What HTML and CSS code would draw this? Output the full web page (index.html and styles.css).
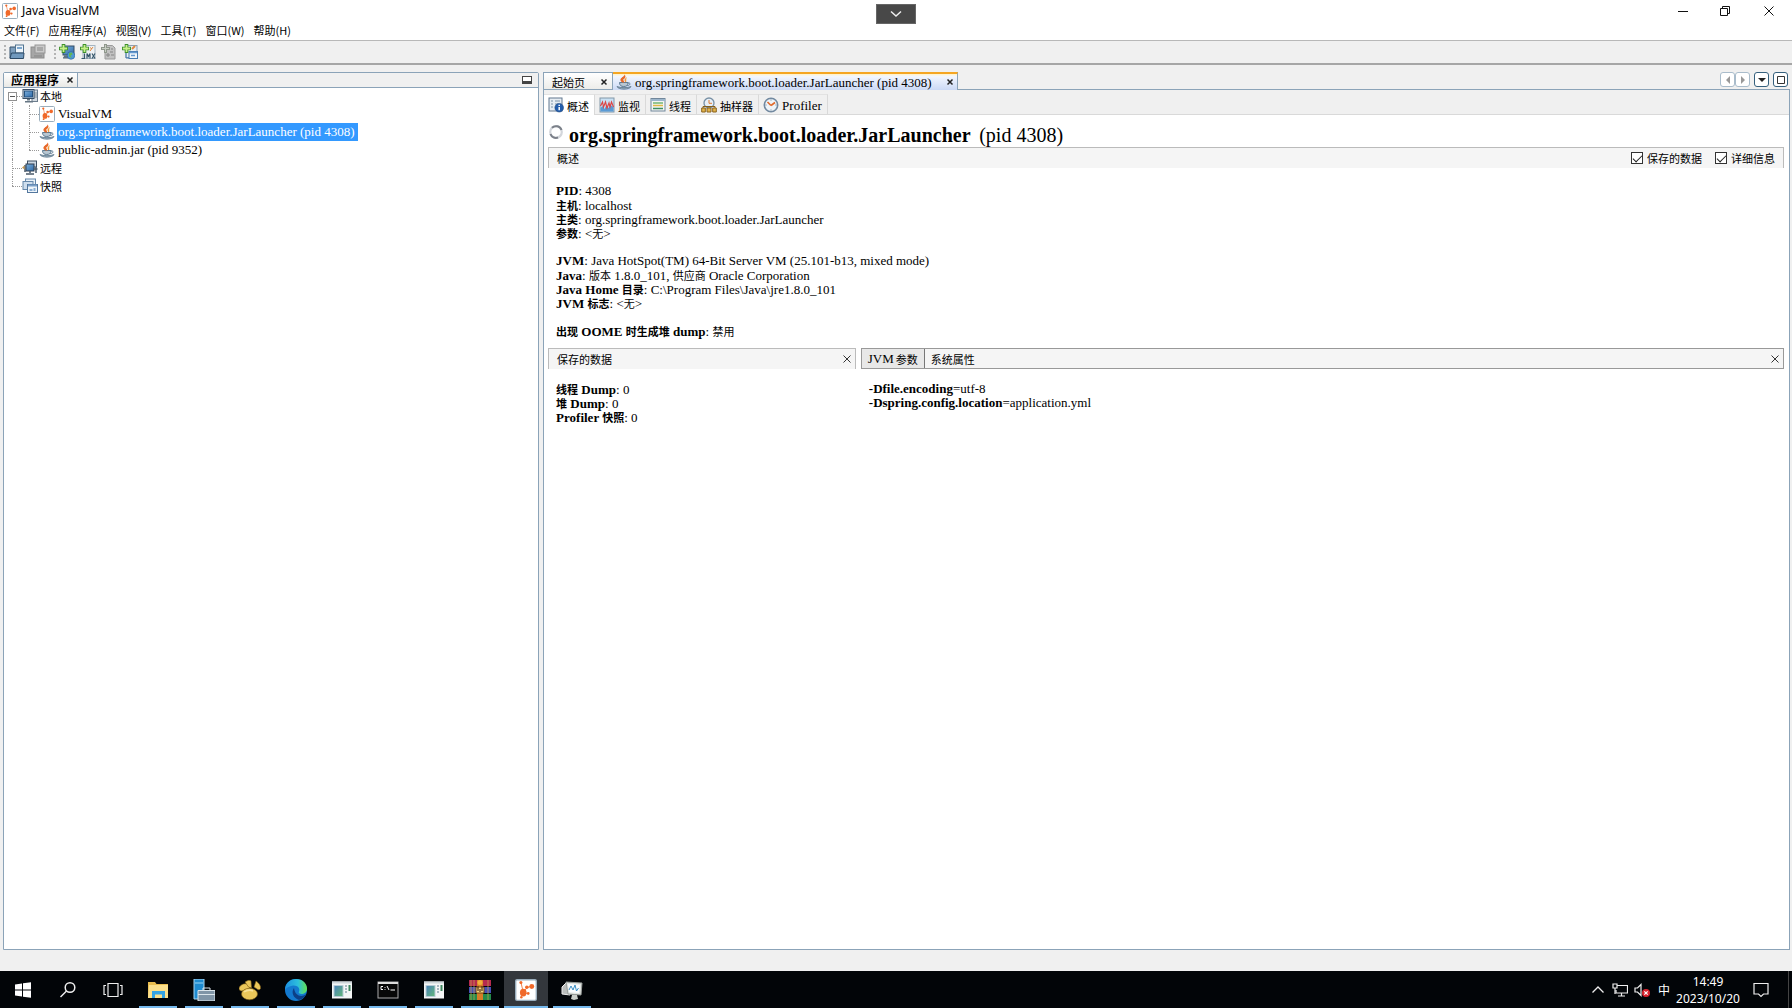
FILE: index.html
```html
<!DOCTYPE html>
<html lang="zh-CN">
<head>
<meta charset="utf-8">
<title>Java VisualVM</title>
<link rel="stylesheet" href="styles.css">
</head>
<body>
<svg class="defs" aria-hidden="true">
  <defs>
    <linearGradient id="blueScreen" x1="0" y1="0" x2="1" y2="1"><stop offset="0" stop-color="#7db0dd"/><stop offset="1" stop-color="#2b67a5"/></linearGradient>
    <linearGradient id="edgeA" x1="0" y1="0" x2="1" y2="0"><stop offset="0" stop-color="#1c8fe0"/><stop offset=".6" stop-color="#2cc0dc"/><stop offset="1" stop-color="#63e34f"/></linearGradient>
    <linearGradient id="app" x1="0" y1="0" x2="1" y2="1"><stop offset="0" stop-color="#4a83b8"/><stop offset="1" stop-color="#62b57a"/></linearGradient>
    <symbol id="vvm" viewBox="0 0 16 16"><rect x=".5" y=".5" width="15" height="15" rx="1" fill="#fff" stroke="#9aaebd"/><path d="M6 9.500 4.300 2.500M7 8.500l2-2.500M7 10l3 1M9 6l3.400-.6" fill="none" stroke="#f0692a" stroke-width=".6"/><g fill="#f0692a"><ellipse cx="6" cy="9.900" rx="2.400" ry="2.900"/><circle cx="4.300" cy="2.600" r="1.100"/><circle cx="8.600" cy="6" r="1.300"/><circle cx="12.200" cy="5.400" r="1.800"/><circle cx="9.600" cy="10.500" r="1"/><circle cx="4.600" cy="13.200" r=".9"/></g></symbol>
    <symbol id="java" viewBox="0 0 16 16"><path d="M8.500 0C10 3-1 5 8 9 6 6 7 5.500 8.500 4.500 10 3.500 9.500 2 8.500 0z" fill="#e8692a"/><path d="M11 3C8.500 4.500 8 6 9 7.500 9.500 9 8.500 9.500 8.500 9.500 12 8 9 6.500 11 3z" fill="#f09a3a"/><path d="M3.500 8.500h8.500c0 3-1.500 4-4.200 4s-4.200-1-4.300-4z" fill="#b8c7d2" stroke="#5f7c92"/><path d="M6.500 8.500C4 6 5 4 7.500 3 7 5 7 6 8.500 8.500z" fill="#e8692a"/><path d="M12 9c3-.7 2.600 2.600-.8 2.600" fill="none" stroke="#5f7c92"/><path d="M1 12.500c1 3.500 13 3.500 14 0-3 1.500-11 1.500-14 0z" fill="#9fb2c0" stroke="#587489" stroke-width=".8"/></symbol>
    <symbol id="host" viewBox="0 0 16 16"><rect x="10" y="2" width="5.500" height="11.500" fill="#d4dbe1" stroke="#6c7d8d"/><path d="M11 5h4M11 7h4M11 9h4" stroke="#7d8c99"/><rect x="1" y="1.500" width="11" height="9" fill="#dce5ec" stroke="#394f66"/><rect x="2.500" y="3" width="8" height="6" fill="url(#blueScreen)" stroke="#24517e"/><path d="M5 11h3v1.500H5zM3 13h8v1.500H3z" fill="#667684"/></symbol>
    <symbol id="remote" viewBox="0 0 16 16"><rect x="5.500" y="1" width="9" height="6" fill="#cad7e4" stroke="#3d4f63"/><rect x="4" y="4" width="8" height="7" fill="url(#blueScreen)" stroke="#303f50"/><path d="M8 11v2M4 14h8M14 7v6M3 5v7M12 9h3.500" fill="none" stroke="#4a5a6a" stroke-width="1.500"/><path d="M0 7.500l2.500-2v4z" fill="#c7964b"/></symbol>
    <symbol id="snap" viewBox="0 0 16 16"><rect x="3.500" y="1" width="10" height="8" fill="#e9f1f8" stroke="#6688aa"/><rect x="1" y="3.500" width="10" height="8" fill="#cfdeed" stroke="#6688aa"/><rect x="5.500" y="6.500" width="10" height="8" fill="#eff5fa" stroke="#53779e"/><path d="M6 7.500h9" stroke="#7ba0c8" stroke-width="2"/><path d="M7.500 11h3v2h-3zM11.500 10h2v3h-2z" fill="#8aaed3"/></symbol>
    <symbol id="open" viewBox="0 0 16 16"><path d="M1 3h5l1-1v12H1z" fill="#7f9fbd" stroke="#34536f"/><rect x="6.500" y="1" width="8" height="8" fill="#edf4fa" stroke="#53748f"/><path d="M8 3h5v2H8z" fill="#7ba6cd"/><path d="M1 14.500 2.500 9H15l-.5 5.500z" fill="#7199bd" stroke="#2d4a66"/></symbol>
    <symbol id="save" viewBox="0 0 16 16"><rect x="1" y="3" width="13" height="11" fill="#a6a6a6" stroke="#8b8b8b"/><rect x="5" y="1" width="10" height="8" fill="#c9c9c9" stroke="#959595"/><path d="M7 4h6M7 6h6M4 12h8" stroke="#858585"/></symbol>
    <symbol id="plus" viewBox="0 0 10 10"><path d="M3 0h4v3h3v4H7v3H3V7H0V3h3z" fill="#3c8f2c"/><path d="M4 1h2v3h3v2H6v3H4V6H1V4h3z" fill="#c8f08a"/></symbol>
    <symbol id="addhost" viewBox="0 0 16 16"><rect x="4" y="2" width="11" height="9" fill="url(#blueScreen)" stroke="#344d65"/><path d="M5 12h4v2H4" fill="#718294" stroke="#4f6071"/><circle cx="12" cy="11.500" r="3.800" fill="#4e98d6" stroke="#2a6196" stroke-width=".6"/><path d="M10 9l3-.5.5 2-2 1 1.500 2.500-3-1.500z" fill="#61b652"/><use href="#plus" width="9" height="9"/></symbol>
    <symbol id="addjmx" viewBox="0 0 16 16"><rect x="3" y="1.500" width="12" height="13" fill="#eef1f4" stroke="#a5b4c0"/><path d="M10 3.500l2 1.500M13 3l-3 4" stroke="#e0893f"/><path d="M4.500 9.500v5h-3M7 14.500v-5l1.500 3 1.500-3v5M12 9.500l3 5M15 9.500l-3 5" fill="none" stroke="#37576b" stroke-width="1.200"/><use href="#plus" width="9" height="9"/></symbol>
    <symbol id="adddump" viewBox="0 0 16 16"><path d="M4 1.500h7.500L14 4v11H4z" fill="#c2c2c2" stroke="#9b9b9b"/><path d="M6 10h2v2H6zM9 8h3M10 11h3M10 5h2" stroke="#858585" fill="none"/><path d="M3 0h3v3h3v3H6v3H3V6H0V3h3z" fill="#8f978c"/><path d="M4 1h1v3h3v1H5v3H4V5H1V4h3z" fill="#c7cdc3"/></symbol>
    <symbol id="addsnap" viewBox="0 0 16 16"><rect x="4" y="1.500" width="11" height="12" fill="#e8eef4" stroke="#8ba1b5"/><path d="M10 5l3-3" stroke="#e0893f" stroke-width="2"/><rect x="7" y="7.500" width="8.500" height="7" fill="#eff5fa" stroke="#477ab0"/><path d="M7 8.500h8M9 11.500h4" stroke="#6499cf" stroke-width="1.500"/><path d="M4 9v5h3" fill="none" stroke="#477ab0"/><use href="#plus" width="9" height="9"/></symbol>
    <symbol id="overview" viewBox="0 0 16 16"><rect x="1" y="1" width="13" height="13" fill="#e7edf3" stroke="#63798f"/><path d="M3 4h2M7 4h5M3 7h2M7 7h3M3 10h2" stroke="#7f94a8"/><circle cx="11.200" cy="10.700" r="4.300" fill="#235dac" stroke="#194480" stroke-width=".6"/><path d="M11.200 10v3.200M11.200 7.700v1.300" stroke="#fff" stroke-width="1.500"/></symbol>
    <symbol id="monitor" viewBox="0 0 16 16"><rect x="1" y="1" width="14" height="14" fill="#c9e1f4" stroke="#8297a8"/><path d="M1.500 14.500V11l2-2 2 3 2-4 2 3 2-3 3 2v4.500z" fill="#5b9bd5"/><path d="M1.500 9l2-4 1 5 2-5 1.500 6 2-5 1 4 1.500-5 2 5" fill="none" stroke="#dc4646" stroke-width="1.200"/></symbol>
    <symbol id="threads" viewBox="0 0 16 16"><rect x="1" y="1.500" width="14" height="12.500" fill="#f4f5f3" stroke="#71879b"/><path d="M1 3h14" stroke="#9bb5cc" stroke-width="2"/><path d="M3 6h10" stroke="#52a652" stroke-width="1.200"/><path d="M3 8.500h10" stroke="#dfb945" stroke-width="1.500"/><path d="M3 11.500h10" stroke="#3d8d62" stroke-width="1.500"/></symbol>
    <symbol id="sampler" viewBox="0 0 16 16"><circle cx="8" cy="6" r="5" fill="#e8eff6" stroke="#7890a5" stroke-width="1.300"/><path d="M8 3v3.300h3" stroke="#de7c34" fill="none"/><path d="M2 11v-1.500h12V11" fill="none" stroke="#84601e"/><path d="M.7 11h3.600v4H.7zM6 11h4v4H6zM11.700 11h3.600v4h-3.600z" fill="#e3b54a" stroke="#8a631e"/></symbol>
    <symbol id="clock" viewBox="0 0 16 16"><circle cx="8" cy="8" r="6.700" fill="#eef4f9" stroke="#7289a0" stroke-width="1.600"/><path d="M8 8.500 4.500 5M8 8.500l4-3" stroke="#e06a2c" stroke-width="1.600"/><path d="M8 2.500v1M8 12.500v1M2.500 8h1M12.500 8h1" stroke="#6b8196"/></symbol>
    <symbol id="window" viewBox="0 0 22 20"><rect x="1" y="1.500" width="20" height="17" fill="#f4f6f6"/><path d="M1 2.500h20" stroke="#cfd6db" stroke-width="2"/><rect x="2.500" y="5" width="10" height="12" fill="#b7cbd6"/><rect x="3.500" y="6" width="8" height="10" fill="url(#app)"/><path d="M14 6h2M14 9h2M14 12h2" stroke="#a8b7c2" stroke-width="2"/><path d="M18.500 5v6" stroke="#3c875e" stroke-width="2"/></symbol>
  </defs>
</svg>

<div class="app">
  <header class="titlebar">
    <svg class="i16"><use href="#vvm"/></svg>
    <h1>Java VisualVM</h1>
    <button class="pull" aria-label="展开"><svg viewBox="0 0 12 8"><path d="M1 1.500l5 4.500 5-4.500" fill="none" stroke="#eee" stroke-width="1.500"/></svg></button>
    <div class="winbtns">
      <button aria-label="最小化"><svg viewBox="0 0 12 12"><path d="M1 6.500h10" stroke="#111"/></svg></button>
      <button aria-label="还原"><svg viewBox="0 0 12 12"><path d="M1.500 3.500h7v7h-7zM3.500 3V1.500h7v7H9" fill="none" stroke="#111"/></svg></button>
      <button aria-label="关闭"><svg viewBox="0 0 12 12"><path d="M1.500 1.500l9 9M10.500 1.500l-9 9" stroke="#111"/></svg></button>
    </div>
  </header>
  <nav class="menu">
    <button>文件(F)</button><button>应用程序(A)</button><button>视图(V)</button><button>工具(T)</button><button>窗口(W)</button><button>帮助(H)</button>
  </nav>
  <div class="toolbar">
    <span class="grip"></span>
    <button aria-label="打开"><svg class="i16"><use href="#open"/></svg></button>
    <button aria-label="保存" disabled><svg class="i16"><use href="#save"/></svg></button>
    <span class="grip"></span>
    <button aria-label="添加远程主机"><svg class="i16"><use href="#addhost"/></svg></button>
    <button aria-label="添加 JMX 连接"><svg class="i16"><use href="#addjmx"/></svg></button>
    <button aria-label="添加 Dump" disabled><svg class="i16"><use href="#adddump"/></svg></button>
    <button aria-label="添加快照"><svg class="i16"><use href="#addsnap"/></svg></button>
  </div>

  <main class="work">
    <aside class="panel left">
      <div class="strip">
        <div class="dock"><b>应用程序</b><button class="x" aria-label="关闭"><svg viewBox="0 0 8 8"><path d="M1.500 1.500l5 5M6.500 1.500l-5 5" stroke="#222" stroke-width="1.500"/></svg></button></div>
        <button class="mini" aria-label="最小化窗口"></button>
      </div>
      <ul class="tree">
        <li><div class="row"><button class="fold" aria-label="折叠"></button><svg class="i16"><use href="#host"/></svg><span>本地</span></div>
          <ul>
            <li><div class="row"><svg class="i16"><use href="#vvm"/></svg><span class="lat">VisualVM</span></div></li>
            <li><div class="row"><svg class="i16"><use href="#java"/></svg><span class="lat sel">org.springframework.boot.loader.JarLauncher (pid 4308)</span></div></li>
            <li><div class="row"><svg class="i16"><use href="#java"/></svg><span class="lat">public-admin.jar (pid 9352)</span></div></li>
          </ul>
        </li>
        <li><div class="row"><svg class="i16"><use href="#remote"/></svg><span>远程</span></div></li>
        <li><div class="row"><svg class="i16"><use href="#snap"/></svg><span>快照</span></div></li>
      </ul>
    </aside>

    <section class="editor">
      <div class="tabs">
        <div class="tab"><span>起始页</span><button class="x" aria-label="关闭"><svg viewBox="0 0 8 8"><path d="M1.500 1.500l5 5M6.500 1.500l-5 5" stroke="#222" stroke-width="1.500"/></svg></button></div>
        <div class="tab on"><svg class="i16"><use href="#java"/></svg><span class="lat">org.springframework.boot.loader.JarLauncher (pid 4308)</span><button class="x" aria-label="关闭"><svg viewBox="0 0 8 8"><path d="M1.500 1.500l5 5M6.500 1.500l-5 5" stroke="#222" stroke-width="1.500"/></svg></button></div>
        <div class="tabctl">
          <button class="dim" aria-label="向左" disabled><svg viewBox="0 0 8 8"><path d="M6 0v8L2 4z" fill="#999"/></svg></button><button class="dim r" aria-label="向右" disabled><svg viewBox="0 0 8 8"><path d="M2 0v8l4-4z" fill="#999"/></svg></button>
          <button aria-label="列表"><svg viewBox="0 0 8 8"><path d="M0 2h8L4 6z" fill="#222"/></svg></button>
          <button aria-label="最大化"><svg viewBox="0 0 8 8"><path d="M.5 .5h7v7h-7z" fill="none" stroke="#333"/></svg></button>
        </div>
      </div>
      <div class="body">
        <div class="views">
          <button class="on"><svg class="i16"><use href="#overview"/></svg><span>概述</span></button>
          <button><svg class="i16"><use href="#monitor"/></svg><span>监视</span></button>
          <button><svg class="i16"><use href="#threads"/></svg><span>线程</span></button>
          <button><svg class="i16"><use href="#sampler"/></svg><span>抽样器</span></button>
          <button><svg class="i16"><use href="#clock"/></svg><span class="lat">Profiler</span></button>
        </div>
        <div class="content">
          <div class="heading"><svg class="i16" viewBox="0 0 16 16"><circle cx="8" cy="8" r="5.800" fill="none" stroke="#d3d6db" stroke-width="2.200"/><path d="M4 3.800A5.800 5.800 0 0 1 13.500 6M2.500 10A5.800 5.800 0 0 0 10 13.500" fill="none" stroke="#7b8089" stroke-width="2"/></svg><h2>org.springframework.boot.loader.JarLauncher <span>(pid 4308)</span></h2></div>
          <div class="bar"><span>概述</span>
            <div class="checks"><label><input type="checkbox" checked>保存的数据</label><label><input type="checkbox" checked>详细信息</label></div>
          </div>
          <div class="info">
            <p><b>PID</b>: 4308</p>
            <p><b><i>主机</i></b>: localhost</p>
            <p><b><i>主类</i></b>: org.springframework.boot.loader.JarLauncher</p>
            <p><b><i>参数</i></b>: &lt;<i>无</i>&gt;</p>
            <p class="gap"><b>JVM</b>: Java HotSpot(TM) 64-Bit Server VM (25.101-b13, mixed mode)</p>
            <p><b>Java</b>: <i>版本</i> 1.8.0_101, <i>供应商</i> Oracle Corporation</p>
            <p><b>Java Home <i>目录</i></b>: C:\Program Files\Java\jre1.8.0_101</p>
            <p><b>JVM <i>标志</i></b>: &lt;<i>无</i>&gt;</p>
            <p class="gap"><b><i>出现</i> OOME <i>时生成堆</i> dump</b>: <i>禁用</i></p>
          </div>
          <div class="cols">
            <section>
              <div class="bar"><span>保存的数据</span><button class="close" aria-label="关闭"><svg viewBox="0 0 8 8"><path d="M.5 .5l7 7M7.500.5l-7 7" stroke="#333"/></svg></button></div>
              <div class="info">
                <p><b><i>线程</i> Dump</b>: 0</p>
                <p><b><i>堆</i> Dump</b>: 0</p>
                <p><b>Profiler <i>快照</i></b>: 0</p>
              </div>
            </section>
            <section>
              <div class="bar sub"><button class="on"><span class="lat">JVM</span> 参数</button><button>系统属性</button><button class="close" aria-label="关闭"><svg viewBox="0 0 8 8"><path d="M.5 .5l7 7M7.500.5l-7 7" stroke="#333"/></svg></button></div>
              <div class="info">
                <p><b>-Dfile.encoding</b>=utf-8</p>
                <p><b>-Dspring.config.location</b>=application.yml</p>
              </div>
            </section>
          </div>
        </div>
      </div>
    </section>
  </main>

  <footer class="taskbar">
    <button class="sys" aria-label="开始"><svg viewBox="0 0 20 20"><path d="M2 4.500l7-1V9.500H2zM10 3.300l8-1.100v7.300h-8zM2 10.500h7v6l-7-1zM10 10.500h8v7.300l-8-1.100z" fill="#fff"/></svg></button>
    <button class="sys" aria-label="搜索"><svg viewBox="0 0 20 20"><circle cx="12" cy="7.500" r="4.800" fill="none" stroke="#eee" stroke-width="1.500"/><path d="M8.500 11 2.500 17" stroke="#eee" stroke-width="1.500"/></svg></button>
    <button class="sys" aria-label="任务视图"><svg viewBox="0 0 20 20"><path d="M5 3.500h10v13H5zM3 5.500H1v9h2M17 5.500h2v9h-2" fill="none" stroke="#eee" stroke-width="1.200"/></svg></button>
    <button class="task" aria-label="文件资源管理器"><svg viewBox="0 0 22 22"><path d="M1 3h7l1.500 2H21v14H1z" fill="#e9bd4f"/><path d="M2 6h19v13H1z" fill="#fbe08c"/><path d="M5 19v-7h13v7h-3v-3.500H8V19z" fill="#35a4e4"/></svg></button>
    <button class="task" aria-label="服务器管理器"><svg viewBox="0 0 22 22"><path d="M1 0h10v20H1z" fill="#1e8bd0" stroke="#a9d8f2"/><path d="M2 4h8" stroke="#9cd7f5"/><path d="M5 11.500h17V22H5z" fill="#8095a7" stroke="#dce5eb"/><path d="M10 11V9h7v2M5 15.500h17" fill="none" stroke="#dce5eb"/></svg></button>
    <button class="task" aria-label="应用"><svg viewBox="0 0 22 22"><g fill="#ebc75a" stroke="#7d5c14" stroke-width=".6"><path d="M0 9C1 6 5 4 8 5l3 4-8 3C1 12 0 11 0 9z"/><path d="M6 3c3-2 5-2 6-1l.5 7-3-1z"/><path d="M17 2c3 2 5 5 4.500 7.500C21 11 19 11 18 10l-3-2z"/><ellipse cx="10.500" cy="15" rx="8" ry="5.800"/></g><path d="M5 13c3-2 7-2 9-1" fill="none" stroke="#f8e29a" stroke-width="1.500"/></svg></button>
    <button class="task" aria-label="Edge"><svg viewBox="0 0 22 22"><circle cx="11" cy="11" r="11" fill="#1379ce"/><path d="M0 11C0 4 5 0 11 0c7 0 11 5 11 9.500 0 4-3 5.500-5.500 5.500-2 0-3.500-1-2.500-2.500C15.500 9 12 6 8 6.500 4 7 1 9 0 11z" fill="url(#edgeA)"/><path d="M9 9c-3 4-1 10 5 12 3-.5 6-3 7-5.500-5 3-11 1.500-12-6.500z" fill="#0c3f86"/></svg></button>
    <button class="task" aria-label="窗口"><svg viewBox="0 0 22 20"><use href="#window"/></svg></button>
    <button class="task" aria-label="命令提示符"><svg viewBox="0 0 22 20"><rect x="1" y="2" width="20" height="16" fill="#080808" stroke="#aaa"/><path d="M1 3h20" stroke="#ddd" stroke-width="2"/><path d="M6 6.500H4v3h2M8 7v.8M8 9v.8M10 6l2 4M13.500 10H18" fill="none" stroke="#fff"/></svg></button>
    <button class="task" aria-label="窗口"><svg viewBox="0 0 22 20"><use href="#window"/></svg></button>
    <button class="task" aria-label="WinRAR"><svg viewBox="0 0 22 22"><path d="M0 1h22v6H0z" fill="#b52a4e"/><path d="M0 8h22v6H0z" fill="#4450b5"/><path d="M0 15h22v6H0z" fill="#24894a"/><path d="M2 1v20M5 1v20M19 1v20" stroke="#c8a64a" stroke-width=".7"/><path d="M8 1h6v20H8z" fill="#d77d27"/><path d="M7 8h8v6H7z" fill="#f2d37d" stroke="#734417"/><path d="M9 7v5M13 7v5M11 10v3" stroke="#553314" stroke-width="1.200"/><circle cx="11" cy="3.500" r="2.500" fill="#f2ae3d"/></svg></button>
    <button class="task on" aria-label="Java VisualVM"><svg viewBox="0 0 22 22"><use href="#vvm"/></svg></button>
    <button class="task" aria-label="性能监视器"><svg viewBox="0 0 22 22"><path d="M1 8l5-5 3 13-8-1z" fill="#babdbb" stroke="#eee"/><path d="M5 3l16 1-1 12-13-1z" fill="#e1e5e2" stroke="#969c99"/><path d="M7 5l12 .7-1 8.300-10-.8z" fill="#f8fcff"/><path d="M8 11l2-4 2 4 2-5 1.500 6 2-3" fill="none" stroke="#3b8fc3"/><path d="M11 16h5l1 4-4 1-3-1z" fill="#c9ceca"/></svg></button>
    <div class="tray">
      <button aria-label="显示隐藏的图标"><svg viewBox="0 0 16 16"><path d="M2.500 10.500 8 5l5.500 5.500" fill="none" stroke="#eee" stroke-width="1.300"/></svg></button>
      <button aria-label="网络"><svg viewBox="0 0 16 16"><path d="M5 3.500h10.500v7.500H4V8M9.500 11v3M6 14h7" fill="none" stroke="#eee" stroke-width="1.200"/><path d="M1 2h4v4H1zM3 6v6" fill="none" stroke="#eee" stroke-width="1.200"/></svg></button>
      <button aria-label="音量"><svg viewBox="0 0 16 16"><path d="M1 6h2.500L7 2.500v11L3.500 10H1z" fill="none" stroke="#eee" stroke-width="1.200"/><circle cx="12" cy="11" r="4" fill="#d9232e"/><path d="M10.300 9.300l3.400 3.400M13.700 9.300l-3.400 3.400" stroke="#fff" stroke-width="1.200"/></svg></button>
      <button class="ime">中</button>
      <div class="time"><span>14:49</span><span>2023/10/20</span></div>
      <button class="note" aria-label="通知"><svg viewBox="0 0 16 16"><path d="M1 1.500h14v10.500h-4.500L8 14.500 5.500 12H1z" fill="none" stroke="#eee" stroke-width="1.200"/></svg></button>
    </div>
  </footer>
</div>
</body>
</html>
```
FILE: styles.css
```css
* { box-sizing: border-box; }
body { margin: 0; font: 11px/14px "Noto Sans CJK SC", sans-serif; color: #000; background: #f0f0f0; }
button { font: inherit; color: inherit; border: 0; padding: 0; margin: 0; background: none; display: flex; align-items: center; justify-content: center; }
ul, p, h1, h2 { margin: 0; padding: 0; list-style: none; }
svg { display: block; flex: none; }
.defs { position: absolute; width: 0; height: 0; }
.i16 { width: 16px; height: 16px; }
.lat { font-family: "Liberation Serif", serif; font-size: 13px; white-space: nowrap; }
.app { min-height: 100vh; display: flex; flex-direction: column; }

.titlebar { position: relative; height: 22px; display: flex; align-items: center; gap: 4px; padding-left: 2px; background: #fff; }
.titlebar h1 { font: 12px/16px "Noto Sans", sans-serif; }
.pull { position: absolute; left: 50%; top: 4px; width: 40px; height: 20px; margin-left: -20px; background: #484848; border: 1px solid #666; }
.pull svg { width: 12px; height: 8px; }
.winbtns { margin-left: auto; display: flex; }
.winbtns button { width: 42px; height: 20px; }
.winbtns button:last-child { width: 46px; }
.winbtns svg { width: 12px; height: 12px; }
.menu { height: 19px; display: flex; gap: 9px; padding: 0 0 2px 4px; background: #fff; border-bottom: 1px solid #b8b8b8; }
.toolbar { height: 24px; display: flex; align-items: center; gap: 5px; padding: 0 0 1px 4px; border-bottom: 2px solid #a6a6a6; background: #f0f0f0; }
.toolbar .grip { height: 14px; border-left: 2px dotted #b4b4b4; margin-right: -2px; }
.toolbar button + .grip { margin-left: 3px; }

.work { flex: 1; display: flex; gap: 4px; padding: 7px 2px 21px 3px; }
.left { flex: 0 0 30%; display: flex; flex-direction: column; background: #fff; border: 1px solid #8ba3b8; border-radius: 2px 2px 0 0; }
.strip { height: 15px; display: flex; justify-content: space-between; background: #f0f0f0; border-bottom: 1px solid #8ba3b8; }
.dock { display: flex; align-items: center; gap: 7px; padding: 0 3px 0 7px; background: linear-gradient(#fff, #e9e9e6); border-right: 1px solid #8ba3b8; }
.dock b { font-size: 12px; line-height: 14px; }
.x, .x svg { width: 8px; height: 8px; }
.mini { width: 10px; height: 8px; margin: 3px 6px; border: 1px solid #444; border-bottom-width: 3px; background: #fff; }

.tree { margin-top: -1px; padding-left: 8px; }
.tree li { position: relative; padding-left: 10px; }
.tree li::before { content: ""; position: absolute; left: 0; top: 9px; width: 10px; border-top: 1px dotted #999; }
.tree li::after { content: ""; position: absolute; left: 0; top: 0; bottom: 0; border-left: 1px dotted #999; }
.tree > li:first-child::after { top: 9px; }
.tree li:last-child::after { bottom: auto; height: 9px; }
.tree ul { padding-left: 7px; }
.row { height: 18px; display: flex; align-items: center; gap: 2px; }
.fold { position: absolute; z-index: 1; left: -4px; top: 5px; width: 9px; height: 9px; border: 1px solid #919191; background: linear-gradient(#555, #555) center / 5px 1px no-repeat #fff; }
.sel { background: #3399ff; color: #fff; line-height: 18px; }
.row .lat { padding: 0 3px 0 1px; }

.editor { flex: 1; min-width: 0; display: flex; flex-direction: column; }
.tabs { height: 18px; display: flex; border-bottom: 1px solid #8ba3b8; }
.tab { display: flex; align-items: center; gap: 15px; padding: 2px 4px 0 8px; border: 1px solid #8ba3b8; border-bottom: 0; background: linear-gradient(#fff, #ededea); }
.tab.on { gap: 3px; padding: 0 3px; border-top: 2px solid #f5a623; border-left: 0; background: linear-gradient(#fff3d0 1px, #f3f7ff 2px, #cbd9f5); height: 18px; }
.tab.on .x { margin-left: 11px; }
.tab.on .lat { padding-top: 2px; }
.tabctl { margin-left: auto; margin-right: 2px; display: flex; height: 15px; }
.tabctl button { width: 15px; height: 15px; margin-left: 4px; border: 1px solid #35607d; border-radius: 3px; background: #fff; }
.tabctl .dim { border-color: #a9bccb; }
.tabctl .r { margin-left: 0; }
.tabctl svg { width: 8px; height: 8px; }
.body { flex: 1; background: #fff; border: 1px solid #8ba3b8; border-top: 0; }
.views { height: 25px; display: flex; padding-top: 4px; background: #f0f0f0; border-bottom: 1px solid #d9d9d9; }
.views button { height: 21px; gap: 3px; padding: 0 5px 0 4px; border-right: 1px solid #d9d9d9; border-top: 1px solid #e2e2e2; }
.views .on { background: #fff; }
.views span { padding-top: 2px; }
.content { padding: 6px 5px 0 4px; }
.heading { height: 26px; display: flex; align-items: center; gap: 5px; }
.heading .i16 { margin-bottom: 4px; }
.heading h2 { font: bold 20px/26px "Liberation Serif", serif; white-space: nowrap; padding-top: 1px; }
.heading span { font-weight: normal; padding-left: 4px; }
.bar { height: 21px; display: flex; align-items: center; justify-content: space-between; padding: 0 8px; background: #f5f5f5; border: 1px solid #bbb; border-bottom: 0; }
.checks { display: flex; gap: 13px; }
.checks label { display: flex; align-items: center; gap: 4px; }
.checks input { appearance: none; width: 12px; height: 12px; margin: 0; border: 1px solid #333; background: #fff; display: grid; place-items: center; }
.checks input::before { content: ""; width: 8px; height: 4px; border: solid #222; border-width: 0 0 1px 1px; transform: rotate(-45deg); margin-bottom: 2px; }
.info { padding: 16px 8px 0; font: 13px/14px "Liberation Serif", serif; }
.info p { height: 14px; white-space: nowrap; }
.info i { font: 11px/14px "Noto Sans CJK SC", sans-serif; font-weight: inherit; }
.info .gap { margin-top: 14px; }
.cols { display: grid; grid-template-columns: 1fr 3fr; gap: 5px; padding-top: 10px; }
.cols .bar { padding-right: 4px; }
.close, .close svg { width: 8px; height: 8px; }
.cols .sub { padding-left: 0; justify-content: flex-start; border: 1px solid #999; }
.sub button { height: 19px; padding: 0 6px; gap: 2px; }
.sub .on { background: #e8e8e8; border-right: 1px solid #777; }
.sub .close { margin-left: auto; padding: 0; height: 8px; }
.cols .info { padding-top: 13px; }

.taskbar { height: 37px; display: flex; background: #020508; color: #fff; }
.sys { width: 45px; }
.sys svg { width: 20px; height: 20px; }
.task { width: 44px; margin: 0 1px; background: linear-gradient(#76b9ed, #76b9ed) center bottom / 38px 2px no-repeat; }
.task svg { width: 22px; height: 22px; }
.task.on { background: linear-gradient(#76b9ed, #76b9ed) center bottom / 44px 2px no-repeat #33373c; }
.tray { margin: 0 3px 0 auto; display: flex; align-items: center; padding-right: 7px; border-right: 1px solid #444; }
.tray button { width: 22px; height: 37px; }
.tray svg { width: 16px; height: 16px; }
.tray .ime { font-size: 12px; }
.time { width: 66px; display: flex; flex-direction: column; text-align: center; font: 12px/17px "Noto Sans", sans-serif; }
.tray .note { width: 40px; }
```
